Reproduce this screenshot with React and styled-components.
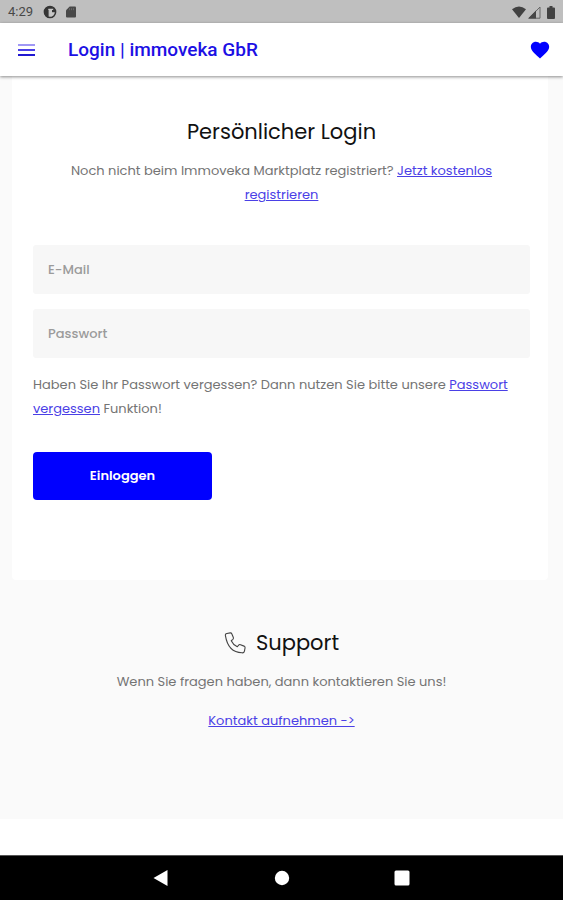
import React from "react";
import styled, { createGlobalStyle } from "styled-components";

const GlobalStyle = createGlobalStyle`
  * { box-sizing: border-box; }
  body {
    margin: 0;
    background: #fff;
    color: #747474;
    font: 400 13px/24px Poppins, Inter, sans-serif;
  }
  h1, h2, p { margin: 0; }
`;

const Screen = styled.div`
  display: flex;
  flex-direction: column;
  min-height: 100vh;
`;

const StatusBar = styled.div`
  display: flex;
  align-items: center;
  height: 23px;
  padding: 1px 6px 0 8px;
  background: #bfbfbf;
  color: #484848;
  font: 400 13px/22px Roboto, sans-serif;
`;

const StatusGroup = styled.div`
  display: flex;
  align-items: center;
  gap: ${(p) => p.$gap}px;
  margin-left: ${(p) => (p.$end ? "auto" : "10px")};
`;

const TopBar = styled.header`
  display: flex;
  align-items: center;
  height: 53px;
  padding: 0 12px 0 16px;
  background: #fff;
  box-shadow: 0 1px 3px rgba(0, 0, 0, 0.45);
  z-index: 1;
`;

const IconButton = styled.button`
  display: flex;
  padding: 0;
  border: 0;
  background: none;
  color: #0000ff;
  cursor: pointer;
`;

const AppTitle = styled.h1`
  flex: 1;
  margin-left: 31px;
  color: #1c10e4;
  font: 500 19px/24px Roboto, sans-serif;
`;

const Content = styled.main`
  padding: 0 15px 86px 12px;
  background: #fafafa;
`;

const Card = styled.section`
  padding: 43px 18px 80px 21px;
  border-radius: 0 0 4px 4px;
  background: #fff;
`;

const Heading = styled.h2`
  display: flex;
  align-items: center;
  justify-content: center;
  gap: 10px;
  color: #111;
  font-size: 21px;
  font-weight: 400;
  line-height: 26px;
`;

const Text = styled.p`
  margin-top: ${(p) => p.$top}px;
  text-align: ${(p) => (p.$center ? "center" : "left")};
`;

const Link = styled.a`
  color: #4a40e6;
  text-decoration: underline;
  text-decoration-thickness: 1px;
`;

const Form = styled.form`
  display: flex;
  flex-direction: column;
  gap: 15px;
  margin-top: 38px;
`;

const Field = styled.input`
  width: 100%;
  height: 49px;
  padding: 0 15px;
  border: 0;
  border-radius: 3px;
  background: #f7f7f7;
  color: #444;
  font: inherit;
  font-weight: 500;
  &::placeholder { color: #9b9b9b; opacity: 1; }
`;

const SubmitButton = styled.button`
  width: 179px;
  height: 48px;
  margin-top: 16px;
  border: 0;
  border-radius: 4px;
  background: #0000ff;
  color: #fff;
  font: inherit;
  font-weight: 600;
  cursor: pointer;
`;

const Support = styled.section`
  padding: 50px 0 0 3px;
`;

const NavBar = styled.nav`
  display: flex;
  align-items: center;
  justify-content: center;
  gap: 96px;
  height: 45px;
  margin-top: auto;
  border-top: 1px solid #555;
  background: #000;
  color: #fff;
`;

const NavButton = styled(IconButton)`
  color: #fff;
`;

export default function App() {
  return (
    <Screen>
      <GlobalStyle />
      <StatusBar>
        <span>4:29</span>
        <StatusGroup $gap={8}>
          <svg width="14" height="14" viewBox="0 0 14 14" aria-hidden="true">
            <circle cx="7" cy="7" r="5.6" fill="none" stroke="#353535" strokeWidth="1.5" />
            <path d="M7 1.5A5.6 5.6 0 0 0 3 11.200l2.600 1V4.100H9v3.100h3.400A5.600 5.600 0 0 0 7 1.500z" fill="#353535" />
            <path d="M5.400 3.700h4.800v1.400H8.700v2.700h2.600l-2.400 3.400H7.200V5.100H5.400z" fill="#c8c8c8" />
          </svg>
          <svg width="12" height="14" viewBox="0 0 12 14" aria-hidden="true">
            <path d="M4.7 1.5H10q1 0 1 1v9q0 1-1 1H2q-1 0-1-1V5.2z" fill="#484848" />
            <path d="M4.5 3.2v2M6.5 3.2v2M8.5 3.2v2" stroke="#666" />
          </svg>
        </StatusGroup>
        <StatusGroup $gap={2} $end>
          <svg width="14" height="12" viewBox="0 0 14 12" aria-hidden="true">
            <path d="M7 12 0 3.2Q7-2.2 14 3.2z" fill="#424242" />
          </svg>
          <svg width="13" height="13" viewBox="0 0 13 13" aria-hidden="true">
            <path d="M1 12.2 12 1v11.2z" fill="none" stroke="#666" />
            <path d="M0 12.6 8 4.6v8z" fill="#484848" />
          </svg>
          <svg width="14" height="13" viewBox="0 0 14 13" aria-hidden="true">
            <path d="M6.500 0h3v1.400H11q1 0 1 1V12q0 1-1 1H5q-1 0-1-1V2.400q0-1 1-1h1.500z" fill="#424242" />
          </svg>
        </StatusGroup>
      </StatusBar>

      <TopBar>
        <IconButton type="button" aria-label="Menü">
          <svg width="21" height="14" viewBox="0 0 21 14" aria-hidden="true">
            <path d="M2 2h17" stroke="#a098f5" strokeWidth="2" />
            <path d="M2 7h17" stroke="#4b40e8" strokeWidth="2" />
            <path d="M2 12h17" stroke="#2118d2" strokeWidth="2" />
          </svg>
        </IconButton>
        <AppTitle>Login | immoveka GbR</AppTitle>
        <IconButton type="button" aria-label="Favoriten">
          <svg width="22" height="22" viewBox="0 0 24 24" fill="currentColor" aria-hidden="true">
            <path d="m12 21.35-1.45-1.32C5.4 15.36 2 12.28 2 8.5 2 5.42 4.42 3 7.5 3c1.74 0 3.41.81 4.5 2.09C13.09 3.81 14.76 3 16.5 3 19.58 3 22 5.42 22 8.5c0 3.78-3.4 6.86-8.55 11.54z" />
          </svg>
        </IconButton>
      </TopBar>

      <Content>
        <Card>
          <Heading>Persönlicher Login</Heading>
          <Text $top={14} $center>
            Noch nicht beim Immoveka Marktplatz registriert? <Link href="#registrieren">Jetzt kostenlos registrieren</Link>
          </Text>
          <Form onSubmit={(e) => e.preventDefault()}>
            <Field type="email" placeholder="E-Mail" aria-label="E-Mail" />
            <Field type="password" placeholder="Passwort" aria-label="Passwort" />
            <Text $top={0}>
              Haben Sie Ihr Passwort vergessen? Dann nutzen Sie bitte unsere <Link href="#passwort">Passwort vergessen</Link> Funktion!
            </Text>
            <SubmitButton type="submit">Einloggen</SubmitButton>
          </Form>
        </Card>
        <Support>
          <Heading>
            <svg width="22" height="22" viewBox="0 0 24 24" fill="none" stroke="#444" strokeWidth="1.2" strokeLinejoin="round" aria-hidden="true">
              <path d="M1.600 4.200Q1 2 3.200 1.600L6.800 1q1.300-.1 1.800 1.100l1.600 3.900q.4 1.200-.5 2L7.900 9.500q1.900 4.200 6.600 6.600l1.500-1.800q.8-1 2-.5l3.900 1.600q1.200.6 1.100 1.800l-.7 3.600q-.5 2.200-2.700 1.900Q4.500 22 1.600 4.200z" />
            </svg>
            Support
          </Heading>
          <Text $top={14} $center>Wenn Sie fragen haben, dann kontaktieren Sie uns!</Text>
          <Text $top={15} $center>
            <Link href="#kontakt">Kontakt aufnehmen -&gt;</Link>
          </Text>
        </Support>
      </Content>

      <NavBar aria-label="Systemnavigation">
        <NavButton type="button" aria-label="Zurück">
          <svg width="24" height="24" viewBox="0 0 24 24" fill="currentColor" aria-hidden="true">
            <path d="M3.500 12 17.500 4v16z" />
          </svg>
        </NavButton>
        <NavButton type="button" aria-label="Startseite">
          <svg width="24" height="24" viewBox="0 0 24 24" fill="currentColor" aria-hidden="true">
            <circle cx="12" cy="12" r="7.200" />
          </svg>
        </NavButton>
        <NavButton type="button" aria-label="Übersicht">
          <svg width="24" height="24" viewBox="0 0 24 24" fill="currentColor" aria-hidden="true">
            <rect x="4.500" y="4.500" width="15" height="15" rx="1.500" />
          </svg>
        </NavButton>
      </NavBar>
    </Screen>
  );
}
